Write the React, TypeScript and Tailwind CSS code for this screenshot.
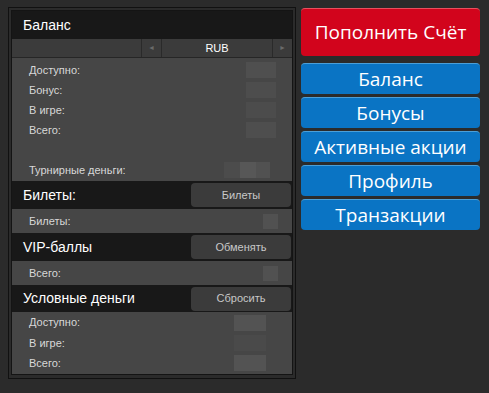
import React from "react";

const lf = { fontFamily: '"Liberation Sans", Arial, sans-serif' };
const rf = { fontFamily: '"Open Sans", "Noto Sans", sans-serif' };

function Row({ label, h = "h-[20px]", children }: { label: string; h?: string; children?: React.ReactNode }) {
  return (
    <div className={`${h} flex items-center justify-between pl-[17px] pr-[14px]`}>
      <span className="text-[11px] text-[#d8d8d8]">{label}</span>
      {children}
    </div>
  );
}

function Section({ title, btn }: { title: string; btn?: string }) {
  return (
    <div className="h-[28px] bg-[#181818] flex items-center justify-between pl-[11px] pr-[1px]">
      <span className="text-[14px] text-white">{title}</span>
      {btn && (
        <div className="w-[100px] h-[24px] rounded-[4px] bg-[#3b3b3b] flex items-center justify-center text-[11px] text-[#c8c8c8]">
          {btn}
        </div>
      )}
    </div>
  );
}

function Blob({ w, c = "bg-[#535353]", h = "h-[16px]" }: { w: string; c?: string; h?: string }) {
  return <div className={`${w} ${h} ${c}`} />;
}

export default function App() {
  return (
    <div className="w-[489px] h-[393px] bg-[#2b2b2b] flex items-start" style={lf}>
      <div className="ml-[8px] mt-[7px] w-[288px] border border-[#111] px-[2px] pt-[2px] pb-[3px]">
        <div className="border border-[#141414] bg-[#464646]">
          <div className="h-[28px] bg-[#181818] flex items-center pl-[11px]">
            <span className="text-[14px] text-white">Баланс</span>
          </div>
          <div className="h-[19px] flex bg-[#3b3b3b] border-b border-[#262626] text-[11px]">
            <div className="w-[130px] border-r border-[#2a2a2a]" />
            <div className="w-[20px] border-r border-[#2a2a2a] flex items-center justify-center text-[7px] text-[#6a6a6a]">◄</div>
            <div className="flex-1 border-r border-[#2a2a2a] flex items-center justify-center text-white">RUB</div>
            <div className="w-[19px] flex items-center justify-center text-[7px] text-[#6a6a6a]">►</div>
          </div>
          <div className="pt-[2px] pb-[1px]">
            <Row label="Доступно:"><div className="flex mr-[2px]"><Blob w="w-[30px]" c="bg-[#4f4f4f]" /></div></Row>
            <Row label="Бонус:"><div className="flex mr-[2px]"><Blob w="w-[30px]" c="bg-[#4d4d4d]" /></div></Row>
            <Row label="В игре:"><div className="flex mr-[2px]"><Blob w="w-[30px]" c="bg-[#4c4c4c]" /></div></Row>
            <Row label="Всего:"><div className="flex mr-[2px]"><Blob w="w-[30px]" c="bg-[#4e4e4e]" /></div></Row>
            <Row label="" />
            <Row label="Турнирные деньги:"><div className="flex mr-[8px]"><Blob w="w-[16px]" c="bg-[#4c4c4c]" /><Blob w="w-[16px]" c="bg-[#575757]" /><Blob w="w-[14px]" c="bg-[#515151]" /></div></Row>
          </div>
          <Section title="Билеты:" btn="Билеты" />
          <Row label="Билеты:" h="h-[24px]"><Blob w="w-[15px]" h="h-[15px]" c="bg-[#515151]" /></Row>
          <Section title="VIP-баллы" btn="Обменять" />
          <Row label="Всего:" h="h-[24px]"><Blob w="w-[15px]" h="h-[15px]" c="bg-[#515151]" /></Row>
          <div className="h-[27px] bg-[#181818] flex items-center justify-between pl-[11px] pr-[1px]">
            <span className="text-[14px] text-white">Условные деньги</span>
            <div className="w-[100px] h-[24px] rounded-[4px] bg-[#3b3b3b] flex items-center justify-center text-[11px] text-[#c8c8c8]">Сбросить</div>
          </div>
          <div className="pb-[1px]">
            <Row label="Доступно:" h="h-[21px]"><div className="flex mr-[12px]"><Blob w="w-[32px]" c="bg-[#535353]" /></div></Row>
            <Row label="В игре:" h="h-[20px]"><div className="flex mr-[12px]"><Blob w="w-[32px]" c="bg-[#4a4a4a]" /></div></Row>
            <Row label="Всего:" h="h-[20px]"><div className="flex mr-[12px]"><Blob w="w-[32px]" c="bg-[#535353]" /></div></Row>
          </div>
        </div>
      </div>
      <div className="ml-[5px] mt-[8px] w-[179px] flex flex-col" style={rf}>
        <div className="h-[48px] rounded-[4px] bg-[#d2041c] border-t border-[#e8505e] flex items-center justify-center text-white text-[19px]">
          Пополнить Счёт
        </div>
        <div className="mt-[7px] flex flex-col gap-[3px]">
          {["Баланс", "Бонусы", "Активные акции", "Профиль", "Транзакции"].map((t) => (
            <div key={t} className="h-[31px] rounded-[4px] bg-[#0a74c4] border-t border-[#4b9fd8] flex items-center justify-center text-white text-[19px]">
              {t}
            </div>
          ))}
        </div>
      </div>
    </div>
  );
}
